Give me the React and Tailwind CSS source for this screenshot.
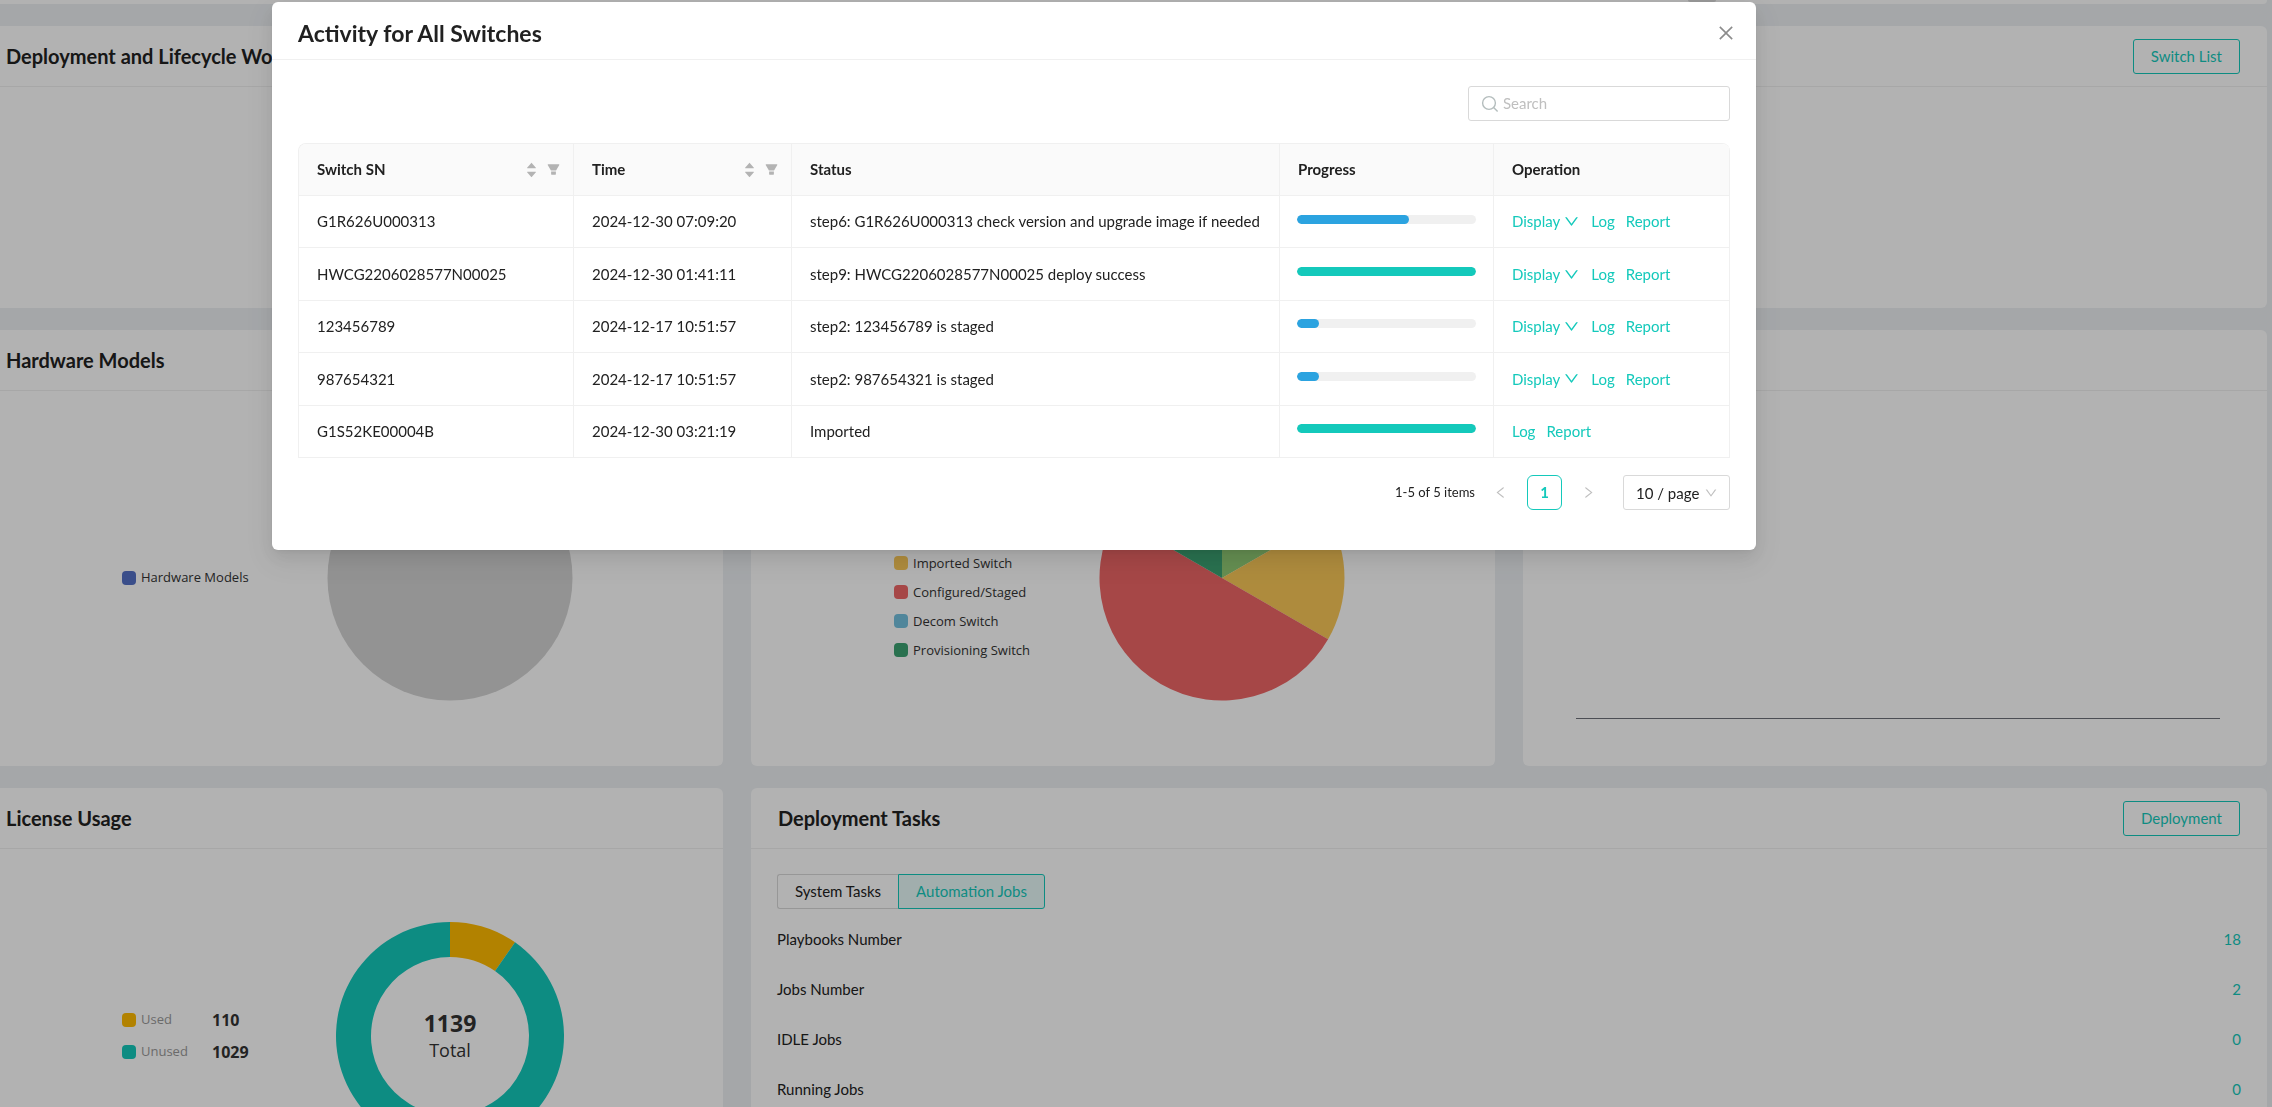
import { useState } from 'react'
import {
  AiFillCaretDown,
  AiFillCaretUp,
  AiFillFilter,
  AiOutlineClose,
  AiOutlineDown,
  AiOutlineLeft,
  AiOutlineRight,
} from 'react-icons/ai'

const switches = [
  { sn: 'G1R626U000313', time: '2024-12-30 07:09:20', status: 'step6: G1R626U000313 check version and upgrade image if needed', progress: 62.5, display: true },
  { sn: 'HWCG2206028577N00025', time: '2024-12-30 01:41:11', status: 'step9: HWCG2206028577N00025 deploy success', progress: 100, display: true },
  { sn: '123456789', time: '2024-12-17 10:51:57', status: 'step2: 123456789 is staged', progress: 12.5, display: true },
  { sn: '987654321', time: '2024-12-17 10:51:57', status: 'step2: 987654321 is staged', progress: 12.5, display: true },
  { sn: 'G1S52KE00004B', time: '2024-12-30 03:21:19', status: 'Imported', progress: 100, display: false },
]

const columns = [
  { label: 'Switch SN', width: 'w-[275px]', sortable: true },
  { label: 'Time', width: 'w-[218px]', sortable: true },
  { label: 'Status', width: '' },
  { label: 'Progress', width: 'w-[214px]' },
  { label: 'Operation', width: 'w-[236px]' },
]

const switchLegend = [
  { label: 'Imported Switch', color: 'bg-[#fac858]' },
  { label: 'Configured/Staged', color: 'bg-[#ee6666]' },
  { label: 'Decom Switch', color: 'bg-[#73c0de]' },
  { label: 'Provisioning Switch', color: 'bg-[#3ba272]' },
]

const jobCounts = [
  { label: 'Playbooks Number', value: 18 },
  { label: 'Jobs Number', value: 2 },
  { label: 'IDLE Jobs', value: 0 },
  { label: 'Running Jobs', value: 0 },
]

// x/y on a circle, angle in degrees clockwise from 12 o'clock
function point(c, r, deg) {
  const rad = (deg * Math.PI) / 180
  return `${c + r * Math.sin(rad)} ${c - r * Math.cos(rad)}`
}

function slice(c, r, from, to) {
  return `M${c} ${c}L${point(c, r, from)}A${r} ${r} 0 ${to - from > 180 ? 1 : 0} 1 ${point(c, r, to)}Z`
}

function ring(c, r, inner, from, to) {
  const large = to - from > 180 ? 1 : 0
  return `M${point(c, r, from)}A${r} ${r} 0 ${large} 1 ${point(c, r, to)}L${point(c, inner, to)}A${inner} ${inner} 0 ${large} 0 ${point(c, inner, from)}Z`
}

function Card({ title, action, className = '', children }) {
  return (
    <section className={`flex flex-col rounded-md bg-white ${className}`}>
      <div className="flex h-[61px] shrink-0 items-center justify-between border-b border-[#f0f0f0] px-[27px]">
        <h2 className="text-xl font-bold">{title}</h2>
        {action && (
          <button type="button" className="h-[35px] rounded-[3px] border border-[#14c9bb] px-[17px] text-[#14c9bb]">
            {action}
          </button>
        )}
      </div>
      {children}
    </section>
  )
}

function Marker({ color }) {
  return <span className={`h-[14px] w-[14px] rounded-[4px] ${color}`} />
}

function Dashboard() {
  const used = (110 / 1139) * 360
  return (
    <main className="-ml-[21px] mr-[5px] space-y-[22px]">
      <div className="flex h-1 justify-end rounded-b-md bg-white pr-[551px]">
        <span className="h-[2px] w-7 rounded-b-full bg-[#dcdcdc]" />
      </div>

      <Card title="Deployment and Lifecycle Workflow" action="Switch List" className="h-[282px]" />

      <div className="grid grid-cols-3 gap-x-[28px] gap-y-[22px]">
        <Card title="Hardware Models">
          <div className="flex h-[375px] items-center pb-[2px] pl-[143px]">
            <ul className="w-[205px] font-['Open_Sans',sans-serif] text-[13px] text-[#333]">
              <li className="flex items-center gap-[5px]">
                <Marker color="bg-[#5470c6]" />
                Hardware Models
              </li>
            </ul>
            <svg className="h-[246px] w-[246px]" viewBox="0 0 246 246">
              <circle cx="123" cy="123" r="122.5" fill="#d3d3d3" />
            </svg>
          </div>
        </Card>

        <Card title="Switch Status">
          <div className="flex h-[375px] items-center pb-[2px] pl-[143px]">
            <ul className="w-[205px] space-y-[9px] pt-[58px] font-['Open_Sans',sans-serif] text-[13px] leading-5 text-[#333]">
              {switchLegend.map((item) => (
                <li key={item.label} className="flex items-center gap-[5px]">
                  <Marker color={item.color} />
                  {item.label}
                </li>
              ))}
            </ul>
            <svg className="h-[246px] w-[246px]" viewBox="0 0 246 246">
              <path d={slice(123, 122.5, 0, 60)} fill="#91cc75" />
              <path d={slice(123, 122.5, 60, 120)} fill="#fac858" />
              <path d={slice(123, 122.5, 120, 300)} fill="#ee6666" />
              <path d={slice(123, 122.5, 300, 360)} fill="#3ba272" />
            </svg>
          </div>
        </Card>

        <Card title="Switch Trend">
          <div className="flex h-[375px] items-end pr-[47px] pb-[47px] pl-[53px]">
            <div className="h-px w-full bg-[#6e7079]" />
          </div>
        </Card>

        <Card title="License Usage">
          <div className="flex h-[375px] items-center pb-[2px] pl-[143px]">
            <dl className="w-[214px] space-y-2 font-['Open_Sans',sans-serif] text-[13px]">
              <div className="flex items-center">
                <Marker color="bg-[#ffbb00]" />
                <dt className="ml-[5px] w-[71px] text-[#999]">Used</dt>
                <dd className="text-base font-bold text-[#333]">110</dd>
              </div>
              <div className="flex items-center">
                <Marker color="bg-[#14c9bb]" />
                <dt className="ml-[5px] w-[71px] text-[#999]">Unused</dt>
                <dd className="text-base font-bold text-[#333]">1029</dd>
              </div>
            </dl>
            <svg className="h-[228px] w-[228px] font-['Open_Sans',sans-serif]" viewBox="0 0 228 228">
              <path d={ring(114, 114, 79, 0, used)} fill="#ffbb00" />
              <path d={ring(114, 114, 79, used, 360)} fill="#14c9bb" />
              <text x="114" y="110" textAnchor="middle" fontSize="23" fontWeight="700" fill="#333">1139</text>
              <text x="114" y="135" textAnchor="middle" fontSize="18" fill="#333">Total</text>
            </svg>
          </div>
        </Card>

        <Card title="Deployment Tasks" action="Deployment" className="col-span-2">
          <div className="px-[26px] pt-[25px]">
            <div className="flex h-[35px]">
              <button type="button" className="rounded-l-[3px] border border-r-0 border-[#d9d9d9] px-[17px]">
                System Tasks
              </button>
              <button type="button" className="rounded-r-[3px] border border-[#14c9bb] bg-[#e7f9f8] px-[17px] text-[#14c9bb]">
                Automation Jobs
              </button>
            </div>
            <dl className="mt-[5px]">
              {jobCounts.map((job) => (
                <div key={job.label} className="flex h-[50px] items-center justify-between">
                  <dt>{job.label}</dt>
                  <dd className="text-[#14c9bb]">{job.value}</dd>
                </div>
              ))}
            </dl>
          </div>
        </Card>
      </div>
    </main>
  )
}

function ActivityTable({ rows }) {
  return (
    <table className="mt-[22px] h-[315px] w-full table-fixed border-separate border-spacing-0 overflow-hidden rounded-t-lg border-t border-l border-[#f0f0f0] text-left">
      <thead>
        <tr className="bg-[#fafafa]">
          {columns.map((col) => (
            <th key={col.label} className={`h-[52px] border-r border-b border-[#f0f0f0] pr-3 pl-[18px] font-bold ${col.width}`}>
              <div className="flex items-center justify-between">
                {col.label}
                {col.sortable && (
                  <span className="flex items-center gap-2 text-[#b3b3b3]">
                    <button type="button" aria-label={`Sort by ${col.label}`} className="flex flex-col">
                      <AiFillCaretUp className="h-[13px] w-[13px]" />
                      <AiFillCaretDown className="-mt-1 h-[13px] w-[13px]" />
                    </button>
                    <button type="button" aria-label={`Filter ${col.label}`}>
                      <AiFillFilter className="h-[15px] w-[15px]" />
                    </button>
                  </span>
                )}
              </div>
            </th>
          ))}
        </tr>
      </thead>
      <tbody>
        {rows.map((row) => (
          <tr key={row.sn}>
            <td className="border-r border-b border-[#f0f0f0] pl-[18px]">{row.sn}</td>
            <td className="border-r border-b border-[#f0f0f0] pl-[18px]">{row.time}</td>
            <td className="border-r border-b border-[#f0f0f0] pl-[18px] whitespace-nowrap">{row.status}</td>
            <td className="border-r border-b border-[#f0f0f0] px-[17px] pb-[5px]">
              <div
                role="progressbar"
                aria-label={`${row.sn} progress`}
                aria-valuenow={row.progress}
                className="h-[9px] overflow-hidden rounded-full bg-[#f0f0f0]"
              >
                <div
                  className={`h-full rounded-full ${row.progress === 100 ? 'bg-[#14c9bb]' : 'bg-[#2ba3e0]'}`}
                  style={{ width: `${row.progress}%` }}
                />
              </div>
            </td>
            <td className="border-r border-b border-[#f0f0f0] pl-[18px]">
              <div className="flex items-center gap-[11px] text-[#14c9bb]">
                {row.display && (
                  <button type="button" className="flex items-center gap-[3px]">
                    Display
                    <AiOutlineDown className="h-[17px] w-[17px]" />
                  </button>
                )}
                <a href="#log">Log</a>
                <a href="#report">Report</a>
              </div>
            </td>
          </tr>
        ))}
      </tbody>
    </table>
  )
}

function ActivityModal() {
  const [query, setQuery] = useState('')
  const rows = switches.filter((s) => s.sn.toLowerCase().includes(query.toLowerCase()))

  return (
    <div className="fixed inset-0 bg-black/30 pt-[2px] pr-[516px] pl-[272px]">
      <div
        role="dialog"
        aria-labelledby="activity-title"
        className="rounded-md bg-white shadow-[0_7px_18px_0_rgba(0,0,0,0.08),0_3px_7px_-4px_rgba(0,0,0,0.12),0_10px_31px_9px_rgba(0,0,0,0.05)]"
      >
        <div className="flex h-[58px] items-center justify-between border-b border-[#f0f0f0] pt-[5px] pr-5 pl-[26px]">
          <h1 id="activity-title" className="text-[23px] font-bold">Activity for All Switches</h1>
          <button type="button" aria-label="Close" className="text-[#8c8c8c]">
            <AiOutlineClose className="h-5 w-5" />
          </button>
        </div>

        <div className="px-[26px] pt-[26px] pb-[40px]">
          <label className="ml-auto flex h-[35px] w-[262px] items-center gap-1 rounded-[3px] border border-[#d9d9d9] px-3">
            <svg className="h-[18px] w-[18px] text-[#b4bdbd]" viewBox="0 0 18 18" fill="none" stroke="currentColor" strokeWidth="1.4">
              <circle cx="8" cy="8" r="6.4" />
              <path d="M12.6 12.6L16.6 16.6" />
            </svg>
            <input
              type="text"
              aria-label="Search"
              placeholder="Search"
              value={query}
              onChange={(e) => setQuery(e.target.value)}
              className="min-w-0 flex-1 outline-none placeholder:text-[#bfbfbf]"
            />
          </label>

          <ActivityTable rows={rows} />

          <div className="mt-[17px] flex items-center justify-end">
            <span className="mr-2 text-[13px]">1-5 of 5 items</span>
            <button type="button" aria-label="Previous page" className="flex h-[35px] w-[35px] items-center justify-center text-[#bfbfbf]">
              <AiOutlineLeft className="h-[15px] w-[15px]" />
            </button>
            <button type="button" className="mx-[9px] h-[35px] w-[35px] rounded-md border border-[#14c9bb] font-bold text-[#14c9bb]">
              1
            </button>
            <button type="button" aria-label="Next page" className="flex h-[35px] w-[35px] items-center justify-center text-[#bfbfbf]">
              <AiOutlineRight className="h-[15px] w-[15px]" />
            </button>
            <div className="relative ml-[17px]">
              <select aria-label="Page size" className="h-[35px] w-[107px] appearance-none rounded-[3px] border border-[#d9d9d9] pt-[2px] pl-3">
                <option>10 / page</option>
                <option>20 / page</option>
              </select>
              <AiOutlineDown className="pointer-events-none absolute top-[11px] right-3 h-[14px] w-[14px] text-[#bfbfbf]" />
            </div>
          </div>
        </div>
      </div>
    </div>
  )
}

export default function App() {
  return (
    <div className="h-screen overflow-hidden bg-[#edf0f3] font-['Lato',sans-serif] text-[15px] text-[#212121]">
      <Dashboard />
      <ActivityModal />
    </div>
  )
}
